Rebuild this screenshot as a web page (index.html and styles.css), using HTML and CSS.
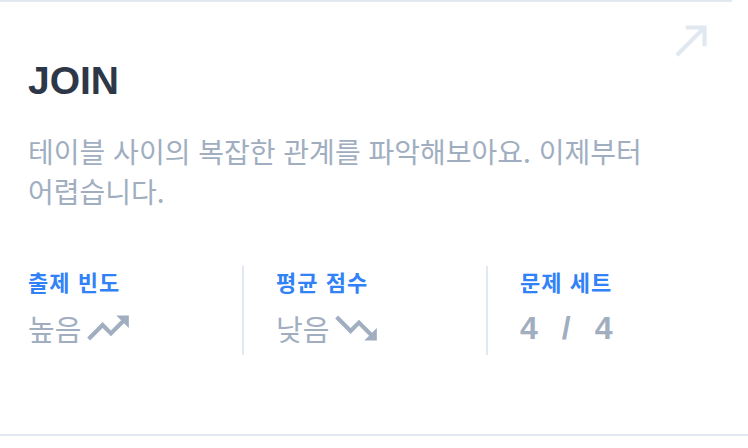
FILE: index.html
```html
<!DOCTYPE html>
<html lang="ko">
    <head>
        <meta charset="UTF-8" />
        <meta name="viewport" content="width=device-width, initial-scale=1.0" />
        <title>JOIN</title>
        <link rel="stylesheet" href="styles.css" />
    </head>
    <body>
        <div class="card">
            <svg class="open-icon" viewBox="0 0 24 24" width="50" height="50">
                <path d="M9 5v2h6.59L4 18.59 5.41 20 17 8.41V15h2V5z" />
            </svg>

            <h1 class="card-title">JOIN</h1>
            <p class="card-desc">테이블 사이의 복잡한 관계를 파악해보아요. 이제부터 어렵습니다.</p>

            <div class="stats">
                <div class="stat">
                    <div class="stat-label">출제 빈도</div>
                    <div class="stat-value">
                        높음
                        <svg class="trend" viewBox="0 0 24 24" width="50" height="50">
                            <path d="M16 6l2.29 2.29-4.88 4.88-4-4L2 16.59 3.41 18l6-6 4 4 6.3-6.29L22 12V6z" />
                        </svg>
                    </div>
                </div>
                <div class="stat">
                    <div class="stat-label">평균 점수</div>
                    <div class="stat-value">
                        낮음
                        <svg class="trend" viewBox="0 0 24 24" width="50" height="50">
                            <path d="M16 18l2.29-2.29-4.88-4.88-4 4L2 7.41 3.41 6l6 6 4-4 6.3 6.29L22 12v6z" />
                        </svg>
                    </div>
                </div>
                <div class="stat">
                    <div class="stat-label">문제 세트</div>
                    <div class="stat-value count">
                        <span>4</span><span>/</span><span>4</span>
                    </div>
                </div>
            </div>
        </div>
        <div class="next-line"></div>
    </body>
</html>
```

FILE: styles.css
```css
body {
    margin: 0;
    background-color: #fff;
    font-family: "Noto Sans CJK KR", "Liberation Sans", sans-serif;
}

.card {
    position: relative;
    width: 732px;
    height: 434px;
    padding: 56px 28px 0;
    box-sizing: border-box;
    border-top: 2px solid #e2e8f0;
}

.open-icon {
    position: absolute;
    top: 13px;
    right: 15px;
    fill: #e2e8f0;
}

.card-title {
    margin: 0;
    font-family: "Liberation Sans", Arial, sans-serif;
    font-size: 39px;
    line-height: 46px;
    font-weight: bold;
    color: #2d3748;
}

.card-desc {
    margin: 27px 0 0;
    font-size: 28px;
    line-height: 40px;
    word-break: keep-all;
    color: #a0aec0;
}

.stats {
    display: flex;
    margin-top: 55px;
}

.stat {
    flex: none;
    width: 214px;
    padding: 1px 0 9px;
}

.stat + .stat {
    width: 244px;
    box-sizing: border-box;
    padding-left: 32px;
    border-left: 2px solid #e2e8f0;
}

.stat-label {
    font-size: 22px;
    line-height: 28px;
    letter-spacing: 1px;
    font-weight: bold;
    color: #3182f6;
}

.stat-value {
    display: flex;
    align-items: center;
    height: 36px;
    margin-top: 15px;
    font-size: 29px;
    line-height: 36px;
    color: #a0aec0;
}

.trend {
    flex: none;
    margin-left: 2px;
    fill: #a0aec0;
}

.count {
    gap: 24px;
    font-family: "Liberation Sans", Arial, sans-serif;
    font-size: 32px;
    font-weight: bold;
}

.next-line {
    height: 2px;
    background-color: #e2e8f0;
}
```
